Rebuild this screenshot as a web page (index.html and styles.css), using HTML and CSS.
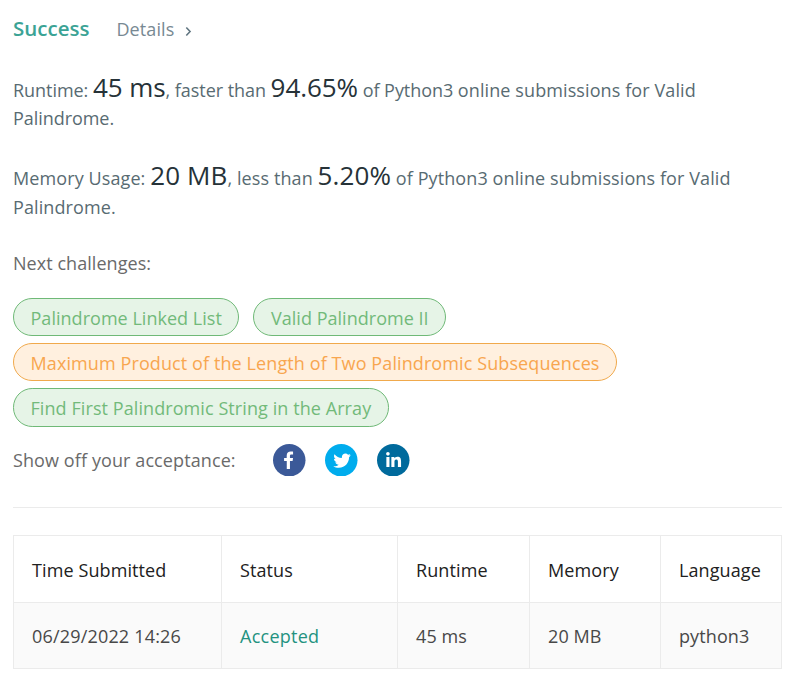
FILE: index.html
```
<!DOCTYPE html>
<html lang="en">
<head>
<meta charset="utf-8">
<title>Submission result</title>
<link rel="stylesheet" href="styles.css">
</head>
<body>
<main class="result">
  <header class="head">
    <span class="status">Success</span>
    <a class="details">Details
      <svg class="chevron" viewBox="0 0 8 12"><path d="M1.500 1.500 5.800 6 1.500 10.500"/></svg>
    </a>
  </header>

  <p class="stat runtime">Runtime: <span class="value">45 ms</span>, faster than <span class="value">94.65%</span> of Python3 <span class="tail">online submissions for Valid</span> Palindrome.</p>
  <p class="stat memory">Memory Usage: <span class="value">20 MB</span>, less than <span class="value">5.20%</span> of Python3 online submissions for Valid Palindrome.</p>

  <p class="next">Next challenges:</p>
  <div class="pills">
    <a class="pill easy">Palindrome Linked List</a>
    <a class="pill easy">Valid Palindrome II</a>
    <a class="pill medium">Maximum Product of the Length of Two Palindromic Subsequences</a>
    <a class="pill easy long">Find First Palindromic String in the Array</a>
  </div>

  <div class="share">
    <span class="share-label">Show off your acceptance:</span>
    <svg class="social" viewBox="0 0 64 64"><circle cx="32" cy="32" r="32" fill="#3b5998"/><path fill="#fff" transform="translate(-5.500 -4.500) scale(1.140)" d="M34.100 47V33.300h4.600l.7-5.300h-5.300v-3.400c0-1.500.4-2.600 2.600-2.600h2.800v-4.800c-.5-.1-2.200-.2-4.100-.2-4.100 0-6.900 2.500-6.900 7.100v4H24v5.300h4.600V47z"/></svg>
    <svg class="social" viewBox="0 0 64 64"><circle cx="32" cy="32" r="32" fill="#00aced"/><path fill="#fff" transform="translate(-1 -1.600) scale(1.080)" d="M48 22.100c-1.200.5-2.400.9-3.800 1 1.400-.8 2.400-2.100 2.900-3.600-1.300.8-2.700 1.300-4.200 1.600C41.700 19.800 40 19 38.200 19c-3.600 0-6.600 2.900-6.600 6.600 0 .5.1 1 .2 1.500-5.500-.3-10.300-2.900-13.500-6.900-.6 1-.9 2.100-.9 3.300 0 2.300 1.200 4.300 2.900 5.500-1.100 0-2.100-.3-3-.8v.1c0 3.200 2.300 5.800 5.300 6.400-.6.1-1.100.2-1.700.2-.4 0-.8 0-1.200-.1.8 2.600 3.300 4.500 6.100 4.600-2.200 1.800-5.100 2.800-8.200 2.800-.5 0-1.100 0-1.600-.1 2.900 1.900 6.400 2.900 10.100 2.900 12.100 0 18.700-10 18.700-18.700v-.8c1.200-1 2.300-2.100 3.200-3.400z"/></svg>
    <svg class="social" viewBox="0 0 64 64"><circle cx="32" cy="32" r="32" fill="#006a9c"/><path fill="#fff" transform="translate(-4.600 -4.600) scale(1.130)" d="M20.400 44h5.400V26.600h-5.400zM23.100 18c-1.700 0-3.100 1.400-3.100 3.100s1.400 3.100 3.100 3.100 3.100-1.400 3.100-3.100-1.400-3.100-3.100-3.100zM39.500 26.200c-2.600 0-4.400 1.400-5.100 2.800h-.1v-2.400h-5.200V44h5.400v-8.600c0-2.300.4-4.500 3.200-4.500 2.800 0 2.800 2.600 2.800 4.600V44H46v-9.500c0-4.700-1-8.300-6.500-8.300z"/></svg>
  </div>

  <hr class="divider">

  <table class="log">
    <colgroup><col class="c1"><col class="c2"><col class="c3"><col class="c4"><col class="c5"></colgroup>
    <thead>
      <tr><th>Time Submitted</th><th>Status</th><th>Runtime</th><th>Memory</th><th>Language</th></tr>
    </thead>
    <tbody>
      <tr><td>06/29/2022 14:26</td><td class="accepted">Accepted</td><td>45 ms</td><td>20 MB</td><td>python3</td></tr>
    </tbody>
  </table>
</main>
</body>
</html>
```
FILE: styles.css
```
* { box-sizing: border-box; }

body {
  margin: 0;
  background: #fff;
  color: #546e7a;
  font: 400 18px/28.5px "Open Sans", "Noto Sans", sans-serif;
  letter-spacing: 0.1px;
}

.result { width: 769px; margin-left: 13px; padding-top: 14px; }

.head { display: flex; align-items: baseline; height: 29px; }
.status { color: #3ba395; font-size: 20.5px; font-weight: 600; letter-spacing: 0; }
.details { margin-left: 27px; color: #788993; }
.chevron {
  width: 7px; height: 11px; margin-left: 6px; vertical-align: -1px;
  fill: none; stroke: #607580; stroke-width: 1.8;
}

p { margin: 0; }
.stat { color: #586b72; }
.runtime { margin-top: 33px; line-height: 28px; letter-spacing: -0.05px; }
.tail { letter-spacing: 0.1px; }
.memory { margin-top: 32px; }
.value { color: #263238; font-size: 26px; line-height: 0; }

.next { margin-top: 28px; color: #6a6a6a; letter-spacing: 0.05px; }

.pills { display: flex; flex-wrap: wrap; gap: 6.8px 14px; margin-top: 20.5px; }
.pill {
  height: 38.3px;
  padding: 5px 16.5px 0;
  border: 1px solid;
  border-radius: 19.2px;
}
.easy { color: #72ba7a; border-color: #6fb977; background: #e6f4e7; letter-spacing: 0.03px; }
.medium { color: #f8a64f; border-color: #f0a94c; background: #fff0df; }
.long { height: 39px; letter-spacing: 0.08px; }

.share { display: flex; align-items: center; height: 33px; margin-top: 16.3px; }
.share-label { width: 260px; color: #6a6a6a; }
.social { width: 32.5px; height: 32.5px; margin-right: 19.5px; }

.divider { height: 1px; margin: 31px 0 27px; border: 0; background: #ebebeb; }

.log { width: 769px; border-collapse: collapse; table-layout: fixed; }
.c1 { width: 208px; }
.c2 { width: 176px; }
.c3 { width: 132px; }
.c4 { width: 131px; }
.c5 { width: 121px; }
th, td { padding: 2px 18px 0; border: 1px solid #ebebeb; text-align: left; font-weight: 400; }
th { height: 67px; color: #212121; }
td { height: 66px; padding-top: 0; color: #484848; background: #fafafa; }
td.accepted { color: #239280; letter-spacing: 0.25px; }
td:first-child { letter-spacing: 0.18px; }
```
